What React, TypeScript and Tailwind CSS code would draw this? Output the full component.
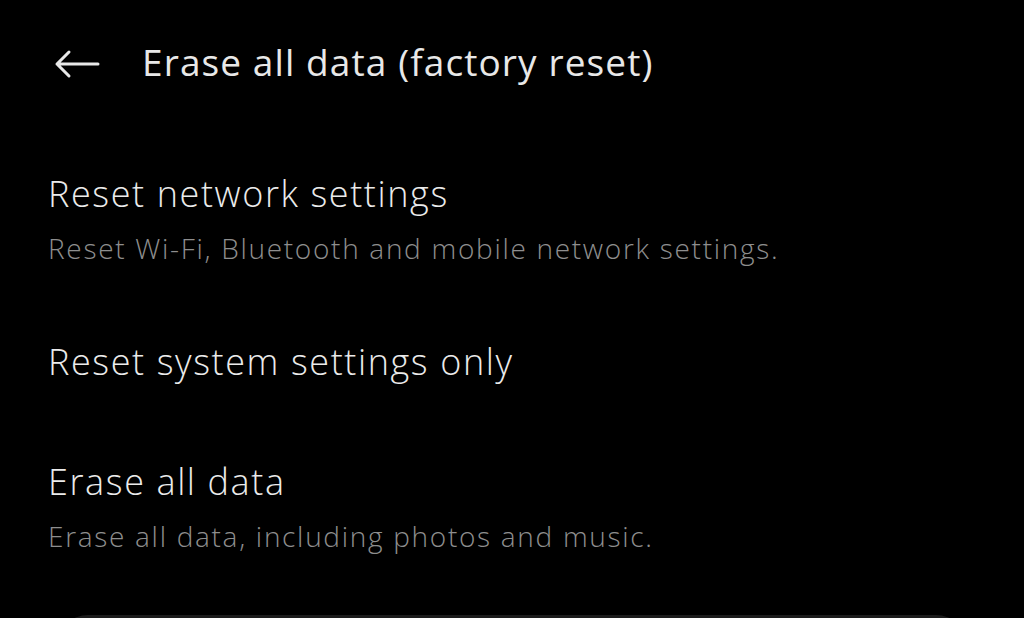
import React from 'react';

const rows = [
  { title: 'Reset network settings', sub: 'Reset Wi-Fi, Bluetooth and mobile network settings.' },
  { title: 'Reset system settings only' },
  { title: 'Erase all data', sub: 'Erase all data, including photos and music.' },
];

export default function App() {
  return (
    <div className="h-[618px] w-[1024px] overflow-hidden bg-black text-[#e8e8e8]" style={{ fontFamily: '"Open Sans", Roboto, sans-serif' }}>
      {/* Header */}
      <div className="mt-[40px] flex h-[48px] items-center">
        <div className="ml-[54px] flex w-[46px] items-center">
          <svg width="46" height="30" viewBox="0 0 46 30" fill="none" stroke="#e8e8e8" strokeWidth="3" strokeLinecap="round" strokeLinejoin="round">
            <path d="M44 15H3M15 3L3 15l12 12" />
          </svg>
        </div>
        <h1 className="ml-[42px] -mt-[4px] text-[37px] leading-[48px] font-normal tracking-[1.1px]">Erase all data (factory reset)</h1>
      </div>

      {/* Options */}
      <div className="mt-[46px] flex flex-col px-[48px]">
        {rows.map((r) => (
          <div key={r.title} className="py-[36px]">
            <div className="text-[36px] leading-[48px] font-light tracking-[1.6px] text-[#ebebeb]">{r.title}</div>
            {r.sub && <div className="mt-[12px] text-[28px] leading-[36px] font-light tracking-[1.7px] text-[#8e8e8e]">{r.sub}</div>}
          </div>
        ))}
      </div>

      <div className="mx-[58px] mt-[25px] h-[60px] rounded-[30px] bg-[#1c1c1c]" />
    </div>
  );
}
